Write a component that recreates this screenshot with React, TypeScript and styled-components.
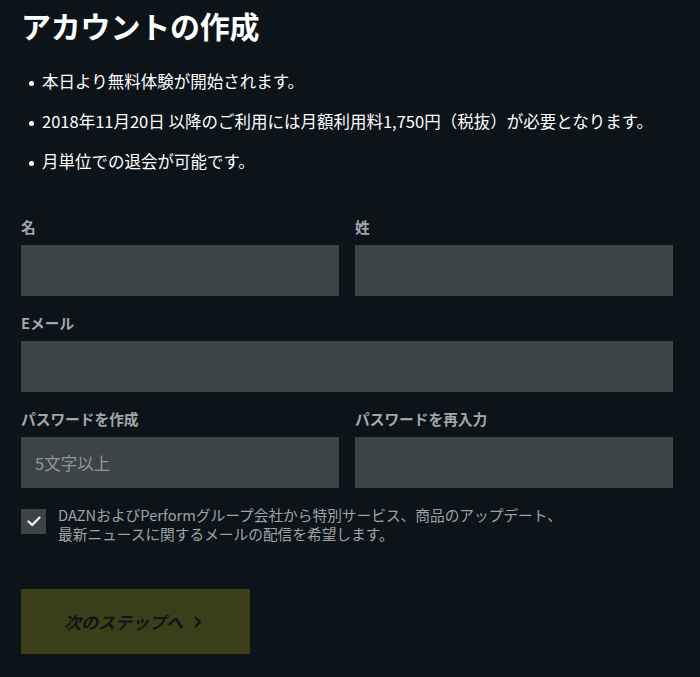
import { useState } from "react";
import styled, { createGlobalStyle } from "styled-components";

const GlobalStyle = createGlobalStyle`
  html, body {
    margin: 0;
    padding: 0;
    background: #0c1319;
  }
  * {
    box-sizing: border-box;
  }
`;

const Page = styled.div`
  min-height: 677px;
  background: #0c1319;
  color: #ffffff;
  font-family: "Noto Sans CJK JP", "Noto Sans", sans-serif;
  padding: 6px 27px 0 21px;
`;

const Title = styled.h1`
  margin: 0;
  font-size: 30px;
  line-height: 38px;
  font-weight: 700;
  letter-spacing: -0.2px;
`;

const Notes = styled.ul`
  list-style: none;
  margin: 25px 0 0;
  padding: 0;
  display: flex;
  flex-direction: column;
  gap: 16px;
`;

const Note = styled.li`
  position: relative;
  padding-left: 21px;
  font-size: 16.5px;
  line-height: 24px;

  &::before {
    content: "";
    position: absolute;
    left: 8px;
    top: 12px;
    width: 5px;
    height: 5px;
    border-radius: 50%;
    background: #ffffff;
  }
`;

const Form = styled.form`
  margin-top: 45px;
  display: flex;
  flex-direction: column;
  gap: 18px;
`;

const Row = styled.div`
  display: grid;
  grid-template-columns: 1fr 1fr;
  column-gap: 16px;
`;

const Field = styled.label`
  display: flex;
  flex-direction: column;
  gap: 9px;
`;

const Label = styled.span`
  font-size: 14.7px;
  line-height: 18px;
  font-weight: 700;
  color: #a3a7ab;
`;

const Input = styled.input`
  height: 51px;
  width: 100%;
  border: none;
  outline: none;
  background: #3d4448;
  color: #ffffff;
  font-family: "Noto Sans CJK JP", "Noto Sans", sans-serif;
  font-size: 16.5px;
  padding: 0 14px;

  &::placeholder {
    color: #92979b;
  }
`;

const Consent = styled.div`
  margin-top: 3px;
  display: flex;
  align-items: flex-start;
  gap: 12px;
`;

const CheckBox = styled.button<{ $checked: boolean }>`
  flex: none;
  width: 25px;
  height: 25px;
  border: none;
  padding: 0;
  background: #3d4448;
  display: flex;
  align-items: center;
  justify-content: center;
  cursor: pointer;

  svg {
    opacity: ${(p) => (p.$checked ? 1 : 0)};
  }
`;

const ConsentText = styled.p`
  margin: -4px 0 0;
  font-size: 14.7px;
  line-height: 19px;
  color: #9fa3a7;
`;

const NextButton = styled.button`
  margin-top: 28px;
  width: 229px;
  height: 65px;
  border: none;
  background: #3b3f19;
  color: #101318;
  font-family: "Noto Sans CJK JP", "Noto Sans", sans-serif;
  font-size: 17px;
  font-weight: 700;
  font-style: italic;
  display: flex;
  align-items: center;
  padding: 0 0 0 43px;
  gap: 11px;
  cursor: pointer;
`;

const App = () => {
  const [checked, setChecked] = useState(true);

  return (
    <Page>
      <GlobalStyle />
      <Title>アカウントの作成</Title>

      <Notes>
        <Note>本日より無料体験が開始されます。</Note>
        <Note>2018年11月20日 以降のご利用には月額利用料1,750円（税抜）が必要となります。</Note>
        <Note>月単位での退会が可能です。</Note>
      </Notes>

      <Form onSubmit={(e) => e.preventDefault()}>
        <Row>
          <Field>
            <Label>名</Label>
            <Input type="text" />
          </Field>
          <Field>
            <Label>姓</Label>
            <Input type="text" />
          </Field>
        </Row>

        <Field>
          <Label>Eメール</Label>
          <Input type="email" />
        </Field>

        <Row>
          <Field>
            <Label>パスワードを作成</Label>
            <Input type="password" placeholder="5文字以上" />
          </Field>
          <Field>
            <Label>パスワードを再入力</Label>
            <Input type="password" />
          </Field>
        </Row>

        <Consent>
          <CheckBox type="button" $checked={checked} onClick={() => setChecked(!checked)}>
            <svg width="14" height="11" viewBox="0 0 14 11" fill="none">
              <path d="M1.5 5.5 L5.2 9 L12.5 1.5" stroke="#ffffff" strokeWidth="2.2" strokeLinecap="round" strokeLinejoin="round" />
            </svg>
          </CheckBox>
          <ConsentText>
            DAZNおよびPerformグループ会社から特別サービス、商品のアップデート、
            <br />
            最新ニュースに関するメールの配信を希望します。
          </ConsentText>
        </Consent>

        <div>
          <NextButton type="submit">
            次のステップへ
            <svg width="8" height="12" viewBox="0 0 8 12" fill="none">
              <path d="M1.5 1.5 L6 6 L1.5 10.5" stroke="#101318" strokeWidth="2" strokeLinecap="round" strokeLinejoin="round" />
            </svg>
          </NextButton>
        </div>
      </Form>
    </Page>
  );
};

export default App;
